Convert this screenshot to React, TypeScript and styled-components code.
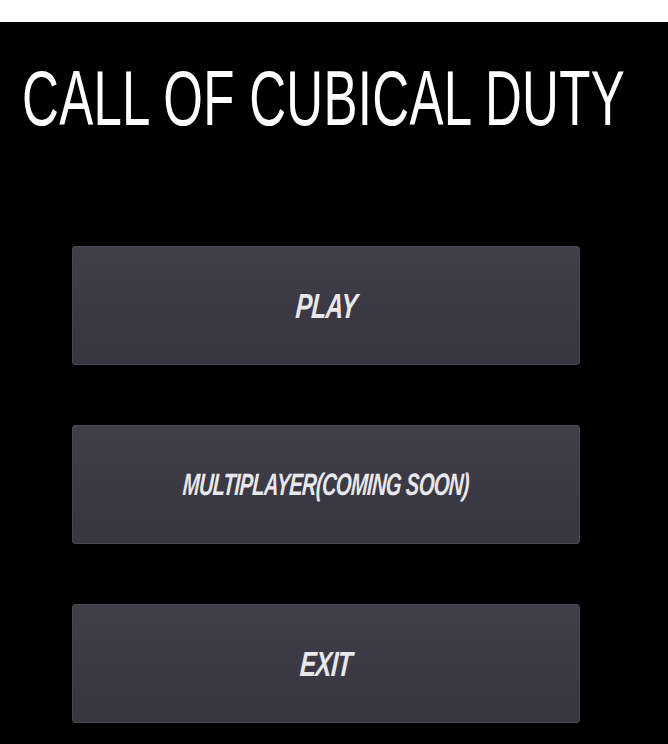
import { createGlobalStyle } from "styled-components";
import styled from "styled-components";

const GlobalStyle = createGlobalStyle`
  html, body {
    margin: 0;
    padding: 0;
    background: #ffffff;
  }
  body {
    font-family: "Liberation Sans", Arial, sans-serif;
  }
`;

type MenuItem = {
  label: string;
  size: number;
  squeeze: number;
};

const MENU_ITEMS: MenuItem[] = [
  { label: "PLAY", size: 35, squeeze: 0.7 },
  { label: "MULTIPLAYER(COMING SOON)", size: 31, squeeze: 0.65 },
  { label: "EXIT", size: 35, squeeze: 0.7 },
];

export default function App() {
  return (
    <>
      <GlobalStyle />
      <Screen>
        <Title>
          <TitleText>CALL OF CUBICAL DUTY</TitleText>
        </Title>
        <Menu>
          {MENU_ITEMS.map((item) => (
            <MenuButton key={item.label}>
              <ButtonLabel $size={item.size} $squeeze={item.squeeze}>
                {item.label}
              </ButtonLabel>
            </MenuButton>
          ))}
        </Menu>
      </Screen>
    </>
  );
}

const Screen = styled.main`
  margin-top: 22px;
  min-height: calc(100vh - 22px);
  background: #000000;
  padding: 51px 0 21px 22px;
  box-sizing: border-box;
  display: flex;
  flex-direction: column;
`;

const Title = styled.h1`
  margin: 0;
  height: 52px;
  white-space: nowrap;
`;

// tall, condensed title: the sans stretched upward
const TitleText = styled.span`
  display: inline-block;
  font-family: "Liberation Sans", Arial, sans-serif;
  font-weight: 400;
  font-size: 51px;
  line-height: 52px;
  letter-spacing: 0.3px;
  color: #ffffff;
  transform: scaleY(1.53);
  transform-origin: center;
`;

const Menu = styled.nav`
  margin-top: 121px;
  margin-left: 50px;
  width: 508px;
  display: flex;
  flex-direction: column;
  gap: 60px;
`;

const MenuButton = styled.button`
  height: 119px;
  width: 100%;
  display: flex;
  align-items: center;
  justify-content: center;
  background: linear-gradient(#403e48, #37353f);
  border: 1px solid #4a4852;
  border-radius: 3px;
  box-shadow: 0 1px 3px rgba(0, 0, 0, 0.6);
  padding: 0;
  cursor: pointer;
`;

const ButtonLabel = styled.span<{ $size: number; $squeeze: number }>`
  display: inline-block;
  font-family: "Liberation Sans", Arial, sans-serif;
  font-weight: 700;
  font-style: italic;
  font-size: ${(p) => p.$size}px;
  line-height: 1;
  color: #e8e8ea;
  letter-spacing: -1px;
  transform: scaleX(${(p) => p.$squeeze}) skewX(-6deg);
  white-space: nowrap;
`;
